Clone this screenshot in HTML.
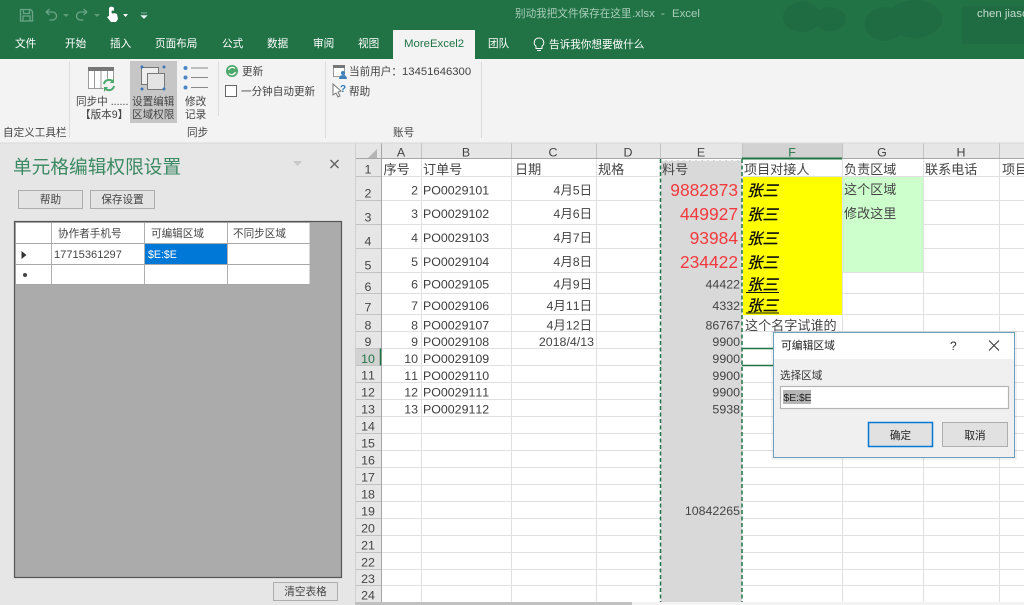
<!DOCTYPE html>
<html lang="zh"><head><meta charset="utf-8"><title>别动我把文件保存在这里.xlsx - Excel</title>
<style>
html,body{margin:0;padding:0;width:1024px;height:605px;overflow:hidden;background:#fff}
svg{display:block;filter:blur(.3px)}
text{font-family:"Liberation Sans","Noto Sans CJK SC",sans-serif;font-size:10.6px;fill:#444;font-kerning:none;white-space:pre}
.t{fill:#fff;font-size:10.6px}
.r{font-size:10.6px;fill:#444}
.c{font-size:12.4px;fill:#3c3c3c}
.cj{font-size:13.1px;fill:#444}
.h{font-size:12.4px;fill:#444;text-anchor:middle}
.n{font-size:12.4px;fill:#444;text-anchor:end}
.red{font-size:17.4px;fill:#f4393c;text-anchor:end}
.z{font-size:15.5px;font-style:italic;fill:#111;stroke:#111;stroke-width:.35px}
.m{text-anchor:middle}
</style></head><body>
<svg width="1024" height="605" viewBox="0 0 1024 605" xmlns="http://www.w3.org/2000/svg">
<rect width="1024" height="605" fill="#fff"/>
<!-- title bar -->
<rect width="1024" height="59" fill="#217346"/>
<g fill="#1f6c43"><ellipse cx="802" cy="17" rx="19" ry="15"/><ellipse cx="830" cy="19" rx="16" ry="12"/><ellipse cx="885" cy="24" rx="20" ry="17"/><ellipse cx="915" cy="19" rx="27" ry="19"/><rect x="962" y="6" width="62" height="38"/></g>
<!-- QAT -->
<g fill="none" stroke="#6aa586" stroke-width="1.3">
<path d="M20.500 9.500h10l2 2v9.500h-12z M23.500 9.500v4h6v-4 M23 21v-5h7v5"/>
<path d="M46 12l3.500-3 M46 12l3.500 3 M46.500 12h6a4 4 0 0 1 0 8h-3"/>
<path d="M87 12l-3.500-3 M87 12l-3.500 3 M86.500 12h-6a4 4 0 0 0 0 8h3"/>
</g>
<path d="M63 14l3 3 3-3zM94 14l3 3 3-3z" fill="#5f9a79"/>
<path d="M109 8a3 3 0 0 1 5 0l0 5 3 1 1 5-2 3h-5l-4-5 2-1z" fill="#fff"/><circle cx="113" cy="12" r="1.500" fill="#217346"/>
<path d="M123 14l5 0-2.500 3z" fill="#fff"/><path d="M141 13h6M141 15.500h6l-3 3z" fill="#e8f2ec" stroke="#e8f2ec" stroke-width=".6"/>
<text x="515" y="17" style="fill:#a8cdb9;font-size:10.6px">别动我把文件保存在这里</text>
<text x="632" y="17" style="fill:#a8cdb9;font-size:11.4px">.xlsx</text>
<text x="661" y="17" style="fill:#a8cdb9;font-size:11.4px">-</text>
<text x="672" y="17" style="fill:#a8cdb9;font-size:11.4px">Excel</text>
<text x="977" y="17" style="fill:#c5ddcf;font-size:11.4px">chen jiaso</text>
<!-- tabs -->
<text class="t" x="15" y="47">文件</text><text class="t" x="65" y="47">开始</text><text class="t" x="110" y="47">插入</text><text class="t" x="155" y="47">页面布局</text><text class="t" x="222" y="47">公式</text><text class="t" x="267" y="47">数据</text><text class="t" x="313" y="47">审阅</text><text class="t" x="358" y="47">视图</text>
<rect x="393" y="30" width="82" height="29" fill="#f3f3f3"/>
<text x="404" y="47" style="fill:#217346;font-size:11.4px">MoreExcel2</text>
<text class="t" x="488" y="47">团队</text>
<path d="M539 38a4.600 4.600 0 0 1 3 8.200v2.300h-6v-2.300a4.600 4.600 0 0 1 3-8.200zM537 50.500h4" fill="none" stroke="#fff"/>
<text class="t" x="549" y="48">告诉我你想要做什么</text>
<!-- ribbon -->
<rect y="59" width="1024" height="84" fill="#f3f3f3"/>
<rect y="142.500" width="1024" height="1" fill="#d8d8d8"/>
<path d="M69.500 62v76M325.500 62v76M481.500 62v76M218.500 62v54" stroke="#dcdcdc" fill="none"/>
<!-- table icon -->
<rect x="88.500" y="67.500" width="25" height="21" fill="#fff" stroke="#9a9a9a"/><rect x="88" y="67" width="26" height="4" fill="#777"/><path d="M94.500 71v17M101 71v17M107.500 71v17" stroke="#9a9a9a"/>
<circle cx="109" cy="85" r="6.500" fill="#f3f3f3"/><path d="M104 84a5 5 0 0 1 9-2M114 86a5 5 0 0 1-9 2" fill="none" stroke="#4da86c" stroke-width="2"/><path d="M114 78v5h-4zM104 92v-5h4z" fill="#4da86c"/>
<text class="r" x="76" y="105">同步中 ......</text><text class="r" x="80" y="118">【版本9】</text>
<!-- selected button -->
<rect x="130" y="61" width="47" height="62" fill="#c6c6c6"/>
<rect x="141.500" y="67.500" width="17" height="17" fill="#eee" stroke="#777"/><rect x="147.500" y="73.500" width="17" height="16" fill="#e4e4e4" stroke="#777"/>
<g fill="#3b78b5"><circle cx="142" cy="67" r="1.500"/><circle cx="164" cy="67" r="1.500"/><circle cx="142" cy="89" r="1.500"/><circle cx="164" cy="89" r="1.500"/></g>
<text class="r" x="132" y="105">设置编辑</text><text class="r" x="132" y="118">区域权限</text>
<g fill="#4a86c5"><circle cx="185.500" cy="68" r="2"/><circle cx="185.500" cy="77.500" r="2"/><circle cx="185.500" cy="87.500" r="2"/></g>
<path d="M191 68h17M191 77.500h17M191 87.500h17" stroke="#888"/>
<text class="r" x="185" y="105">修改</text><text class="r" x="185" y="118">记录</text>
<text class="r" x="187" y="136">同步</text><text class="r" x="3" y="136">自定义工具栏</text>
<circle cx="232" cy="71" r="6" fill="#4da86c"/><path d="M228.500 70a4 4 0 0 1 6.500-1.500M235.500 72a4 4 0 0 1-6.500 1.500" fill="none" stroke="#fff" stroke-width="1.200"/>
<text class="r" x="242" y="75">更新</text>
<rect x="225.500" y="85.500" width="11" height="11" fill="#fff" stroke="#666"/>
<text class="r" x="241" y="95">一分钟自动更新</text>
<rect x="333.500" y="65.500" width="11" height="11" fill="#fff" stroke="#999"/><rect x="333" y="65" width="12" height="3" fill="#777"/><circle cx="343" cy="73" r="2" fill="#3f7fba"/><path d="M339 79a4 4 0 0 1 8 0z" fill="#3f7fba"/>
<text class="r" x="349" y="75">当前用户：</text><text x="402" y="75" style="font-size:11.300px">13451646300</text>
<path d="M333 84l0 11 3-2 2 4 2-1-2-4 3-1z" fill="#fff" stroke="#777"/>
<text x="340" y="92" style="font-size:10px;font-weight:700;fill:#2f78bf">?</text>
<text class="r" x="349" y="95">帮助</text>
<text class="r" x="393" y="136">账号</text>
<!-- left pane -->
<rect y="143.500" width="355" height="461.500" fill="#e6e6e6"/>
<text x="13" y="173.500" style="font-size:18.700px;fill:#3b8a63">单元格编辑权限设置</text>
<path d="M293 161h9l-4.500 5z" fill="#c8c8c8"/>
<path d="M330.500 160l8 8M338.500 160l-8 8" stroke="#666" stroke-width="1.500"/>
<rect x="18.500" y="190.500" width="64" height="18" fill="#e3e3e3" stroke="#adadad"/><text class="r m" x="50.500" y="203">帮助</text>
<rect x="90.500" y="190.500" width="64" height="18" fill="#e3e3e3" stroke="#adadad"/><text class="r m" x="122.500" y="203">保存设置</text>
<rect x="14.500" y="221.500" width="327" height="356" fill="#ababab" stroke="#555" stroke-width="1.200"/>
<rect x="16" y="223" width="294" height="62" fill="#fff"/>
<rect x="145" y="244" width="82" height="20" fill="#0078d7"/>
<path d="M51.500 223v62M144.500 223v62M227.500 223v62M16 243.500h294M16 264.500h294M16 284.500h294M310 223v62" stroke="#a8a8a8" fill="none" stroke-width=".9"/>
<text class="r" x="58" y="237">协作者手机号</text><text class="r" x="151" y="237">可编辑区域</text><text class="r" x="233" y="237">不同步区域</text>
<path d="M21.500 251l5 4-5 4z" fill="#333"/><circle cx="25" cy="275" r="2" fill="#444"/>
<text x="54" y="258" style="font-size:11.100px">17715361297</text><text x="148" y="258" style="fill:#fff;font-size:10.600px">$E:$E</text>
<rect x="273.500" y="582.500" width="64" height="18" fill="#e3e3e3" stroke="#adadad"/><text class="r m" x="305.500" y="595">清空表格</text>
<!-- sheet headers -->
<rect x="355" y="143.500" width="669" height="15.500" fill="#e6e6e6"/>
<rect x="355" y="159" width="26" height="443" fill="#e6e6e6"/>
<rect x="742" y="143.500" width="100" height="15.500" fill="#d2d2d2"/>
<rect x="356" y="348.500" width="25" height="17" fill="#d2d2d2"/>
<path d="M368 158h9v-9z" fill="#b5b5b5"/>
<!-- grid -->
<path d="M381 176.500H1024M381 200.500H1024M381 224.500H1024M381 248.500H1024M381 272.500H1024M381 293.500H1024M381 314.500H1024M381 331.500H1024M381 348.500H1024M381 365.500H1024M381 382.500H1024M381 399.500H1024M381 416.500H1024M381 433.500H1024M381 450.500H1024M381 467.500H1024M381 484.500H1024M381 501.500H1024M381 518.500H1024M381 535.500H1024M381 552.500H1024M381 569.500H1024M381 585.500H1024M421.500 159V602M511.500 159V602M596.500 159V602M842.500 159V602M923.500 159V602M999.500 159V602" stroke="#e0e0e0" fill="none"/>
<path d="M356 176.500h25M356 200.500h25M356 224.500h25M356 248.500h25M356 272.500h25M356 293.500h25M356 314.500h25M356 331.500h25M356 348.500h25M356 365.500h25M356 382.500h25M356 399.500h25M356 416.500h25M356 433.500h25M356 450.500h25M356 467.500h25M356 484.500h25M356 501.500h25M356 518.500h25M356 535.500h25M356 552.500h25M356 569.500h25M356 585.500h25" stroke="#c2c2c2" fill="none"/>
<path d="M421.500 143.500v15M511.500 143.500v15M596.500 143.500v15M660.500 143.500v15M742.500 143.500v15M842.500 143.500v15M923.500 143.500v15M999.500 143.500v15" stroke="#c4c4c4" fill="none"/>
<path d="M355 158.500h669M381.500 143.500V602" stroke="#a6a6a6" fill="none"/>
<path d="M355.500 143.500V602" stroke="#cfcfcf" fill="none"/>
<!-- fills -->
<rect x="661" y="160" width="81" height="442" fill="#d9d9d9"/>
<rect x="743" y="177" width="99" height="138" fill="#ffff00"/>
<rect x="843" y="177" width="80" height="95" fill="#ccffcc"/>
<path d="M742 158.500h100" stroke="#217346" stroke-width="2" fill="none"/>
<path d="M380.500 348.500v17" stroke="#217346" stroke-width="1.500" fill="none"/>
<path d="M661 160H742" stroke="#fff" stroke-width="1.500" stroke-dasharray="4 2" fill="none"/>
<path d="M660.500 159V602M742 159V602" stroke="#217346" stroke-width="1.500" stroke-dasharray="4 2.500" fill="none"/>
<path d="M742 348.500h40M742 365.500h40" stroke="#217346" stroke-width="1.600" fill="none"/>
<!-- column letters -->
<text class="h" x="401" y="156.500">A</text><text class="h" x="466" y="156.500">B</text><text class="h" x="553" y="156.500">C</text><text class="h" x="628" y="156.500">D</text><text class="h" x="701" y="156.500">E</text><text class="h" x="792" y="156.500" style="fill:#217346">F</text><text class="h" x="882" y="156.500">G</text><text class="h" x="961" y="156.500">H</text>
<!-- row numbers -->
<g class="rows">
<text class="h" x="368" y="173.500">1</text><text class="h" x="368" y="197.500">2</text><text class="h" x="368" y="221.500">3</text><text class="h" x="368" y="245.500">4</text><text class="h" x="368" y="269.500">5</text><text class="h" x="368" y="291">6</text><text class="h" x="368" y="311.500">7</text><text class="h" x="368" y="329.500">8</text><text class="h" x="368" y="346">9</text><text class="h" x="368" y="363" style="fill:#217346">10</text><text class="h" x="368" y="379.500">11</text><text class="h" x="368" y="396.500">12</text><text class="h" x="368" y="413.500">13</text><text class="h" x="368" y="430.500">14</text><text class="h" x="368" y="447.500">15</text><text class="h" x="368" y="464.500">16</text><text class="h" x="368" y="481.500">17</text><text class="h" x="368" y="498.500">18</text><text class="h" x="368" y="515.500">19</text><text class="h" x="368" y="532.500">20</text><text class="h" x="368" y="549.500">21</text><text class="h" x="368" y="566.500">22</text><text class="h" x="368" y="583">23</text><text class="h" x="368" y="599.500">24</text>
</g>
<!-- row 1 -->
<text class="cj" x="383.500" y="174">序号</text><text class="cj" x="423" y="174">订单号</text><text class="cj" x="515" y="174">日期</text><text class="cj" x="598" y="174">规格</text><text class="cj" x="662" y="174">料号</text><text class="cj" x="744" y="174">项目对接人</text><text class="cj" x="844" y="174">负责区域</text><text class="cj" x="925" y="174">联系电话</text><text class="cj" x="1002" y="174">项目</text>
<!-- A -->
<text class="n" x="418" y="194.500">2</text><text class="n" x="418" y="218">3</text><text class="n" x="418" y="242">4</text><text class="n" x="418" y="266">5</text><text class="n" x="418" y="288.500">6</text><text class="n" x="418" y="310">7</text><text class="n" x="418" y="329.500">8</text><text class="n" x="418" y="346">9</text><text class="n" x="418" y="363">10</text><text class="n" x="418" y="380">11</text><text class="n" x="418" y="396.500">12</text><text class="n" x="418" y="413.500">13</text>
<!-- B -->
<g>
<text class="c" x="423" y="194.500">PO0029101</text><text class="c" x="423" y="218">PO0029102</text><text class="c" x="423" y="242">PO0029103</text><text class="c" x="423" y="266">PO0029104</text><text class="c" x="423" y="288.500">PO0029105</text><text class="c" x="423" y="310">PO0029106</text><text class="c" x="423" y="329.500">PO0029107</text><text class="c" x="423" y="346">PO0029108</text><text class="c" x="423" y="363">PO0029109</text><text class="c" x="423" y="380">PO0029110</text><text class="c" x="423" y="396.500">PO0029111</text><text class="c" x="423" y="413.500">PO0029112</text>
</g>
<!-- C -->
<text class="n" x="592" y="194.500">4月5日</text><text class="n" x="592" y="218">4月6日</text><text class="n" x="592" y="242">4月7日</text><text class="n" x="592" y="266">4月8日</text><text class="n" x="592" y="288.500">4月9日</text><text class="n" x="592" y="310">4月11日</text><text class="n" x="592" y="329.500">4月12日</text><text class="n" x="594" y="346">2018/4/13</text>
<!-- E -->
<text class="red" x="738" y="196">9882873</text><text class="red" x="738" y="220">449927</text><text class="red" x="738" y="244">93984</text><text class="red" x="738" y="268">234422</text>
<text class="n" x="740" y="288.500">44422</text><text class="n" x="740" y="310">4332</text><text class="n" x="740" y="329.500">86767</text><text class="n" x="740" y="346">9900</text><text class="n" x="740" y="363">9900</text><text class="n" x="740" y="380">9900</text><text class="n" x="740" y="396.500">9900</text><text class="n" x="740" y="413.500">5938</text><text class="n" x="740" y="515">10842265</text>
<!-- F -->
<text class="z" x="747" y="196">张三</text><text class="z" x="747" y="220">张三</text><text class="z" x="747" y="244">张三</text><text class="z" x="747" y="268">张三</text><text class="z" x="747" y="290">张三</text><text class="z" x="747" y="311">张三</text>
<path d="M746 292.500h33M746 313h33" stroke="#111" fill="none"/>
<text class="cj" x="745" y="330">这个名字试谁的</text>
<!-- G -->
<text class="cj" x="844" y="194">这个区域</text><text class="cj" x="844" y="218">修改这里</text>
<!-- bottom -->
<rect x="355" y="602" width="277" height="3" fill="#c0c0c0"/>
<rect x="632" y="602" width="392" height="3" fill="#f3f3f3"/>
<!-- dialog -->
<rect x="771" y="331" width="246" height="129" fill="#000" opacity=".05"/>
<rect x="773.500" y="332.500" width="241" height="125" fill="#f0f0f0" stroke="#6a9fbe"/>
<rect x="774" y="333" width="240" height="26" fill="#fff"/>
<text x="781" y="349" style="font-size:10.800px;fill:#222">可编辑区域</text>
<text x="950" y="350" style="font-size:12px;fill:#333">?</text>
<path d="M989 340.500l10 10M999 340.500l-10 10" stroke="#333" fill="none"/>
<text class="r" x="780" y="379" style="fill:#333">选择区域</text>
<rect x="780.500" y="386.500" width="228" height="22" fill="#fff" stroke="#b4b4b4" stroke-width="1.200"/>
<rect x="783" y="390" width="28" height="14" fill="#b5b5b5"/>
<text x="783.500" y="401" style="font-size:10.300px;fill:#222">$E:$E</text>
<rect x="868.500" y="422.500" width="64" height="24" fill="#e1e1e1" stroke="#0078d7" stroke-width="1.500"/>
<text class="r m" x="900.500" y="439" style="fill:#222">确定</text>
<rect x="942.500" y="422.500" width="65" height="24" fill="#e1e1e1" stroke="#adadad"/>
<text class="r m" x="975" y="439" style="fill:#222">取消</text>
</svg>
</body></html>
